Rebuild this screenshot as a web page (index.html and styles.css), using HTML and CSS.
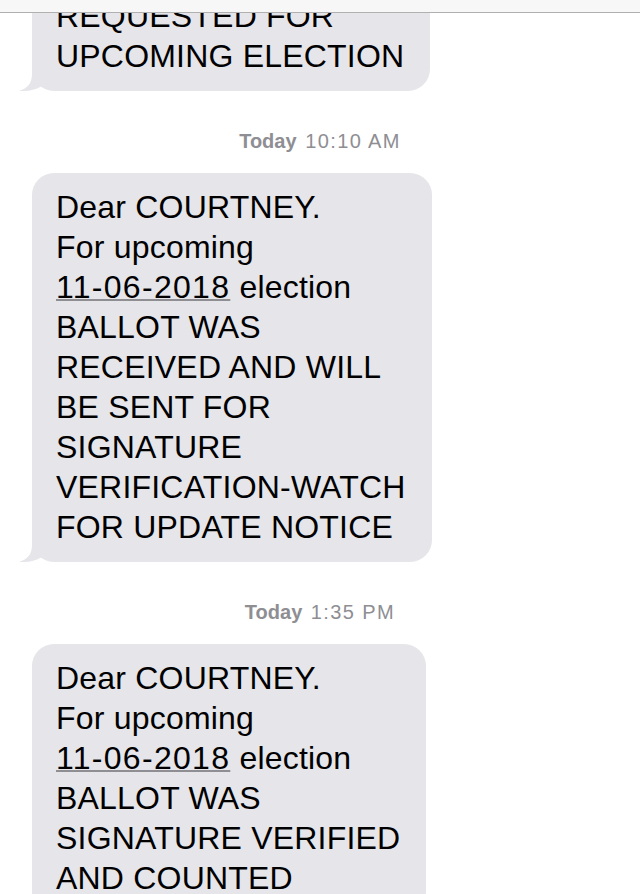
FILE: index.html
```html
<!DOCTYPE html>
<html lang="en">
<head>
<meta charset="utf-8">
<title>Messages</title>
<link rel="stylesheet" href="styles.css">
</head>
<body>
<div class="screen">
  <header class="navbar"></header>
  <main class="thread">
    <div class="thread-scroll">
      <div class="bubble">
        <p class="bubble-text">REQUESTED FOR<br>UPCOMING ELECTION</p>
        <svg class="tail" viewBox="0 0 40 26" aria-hidden="true"><path d="M14 2 L14 9 Q14 22.5 1 25.7 Q14 26.9 23 21.5 L30 2 Z"/></svg>
      </div>

      <div class="timestamp"><span class="ts-day">Today</span> <span class="ts-time">10:10 AM</span></div>

      <div class="bubble">
        <p class="bubble-text">Dear COURTNEY.<br>For upcoming<br><span class="link">11-06-2018</span> election<br>BALLOT WAS<br>RECEIVED AND WILL<br>BE SENT FOR<br>SIGNATURE<br>VERIFICATION-WATCH<br>FOR UPDATE NOTICE</p>
        <svg class="tail" viewBox="0 0 40 26" aria-hidden="true"><path d="M14 2 L14 9 Q14 22.5 1 25.7 Q14 26.9 23 21.5 L30 2 Z"/></svg>
      </div>

      <div class="timestamp"><span class="ts-day">Today</span> <span class="ts-time">1:35 PM</span></div>

      <div class="bubble">
        <p class="bubble-text">Dear COURTNEY.<br>For upcoming<br><span class="link">11-06-2018</span> election<br>BALLOT WAS<br>SIGNATURE VERIFIED<br>AND COUNTED</p>
        <svg class="tail" viewBox="0 0 40 26" aria-hidden="true"><path d="M14 2 L14 9 Q14 22.5 1 25.7 Q14 26.9 23 21.5 L30 2 Z"/></svg>
      </div>
    </div>
  </main>
</div>
</body>
</html>
```

FILE: styles.css
```css
html, body {
  margin: 0;
  padding: 0;
  background: #ffffff;
  overflow: hidden;
}

.screen {
  width: 640px;
  height: 894px;
  display: flex;
  flex-direction: column;
  overflow: hidden;
  font-family: "Liberation Sans", Arial, sans-serif;
  background: #ffffff;
}

.navbar {
  flex: 0 0 auto;
  height: 12px;
  background: #f7f7f7;
  border-bottom: 1px solid #b0b0b0;
  position: relative;
  z-index: 2;
}

.thread {
  flex: 1 1 auto;
  overflow: hidden;
}

.thread-scroll {
  margin-top: -31px;
  display: flex;
  flex-direction: column;
  align-items: flex-start;
  padding-left: 32px;
}

.bubble {
  position: relative;
  background: #e5e5ea;
  border-radius: 22px;
  padding: 14px 26px 15px 24px;
  width: fit-content;
  box-sizing: border-box;
}

.bubble-text {
  margin: 0;
  font-size: 32px;
  line-height: 40px;
  letter-spacing: 0.2px;
  color: #000000;
  white-space: nowrap;
  position: relative;
  z-index: 1;
}

.link {
  letter-spacing: 1.3px;
  text-decoration: underline;
  text-decoration-color: #8e8e93;
  text-decoration-thickness: 2px;
  text-underline-offset: 1px;
}

.tail {
  position: absolute;
  left: -14px;
  bottom: 0;
  width: 40px;
  height: 26px;
  fill: #e5e5ea;
  display: block;
}

.timestamp {
  align-self: stretch;
  margin-left: -32px;
  margin-top: 38px;
  margin-bottom: 20px;
  height: 24px;
  line-height: 24px;
  font-size: 20px;
  color: #8e8e93;
  text-align: center;
}

.ts-day {
  font-weight: bold;
}

.ts-time {
  letter-spacing: 1.4px;
  margin-left: 3px;
}
```
